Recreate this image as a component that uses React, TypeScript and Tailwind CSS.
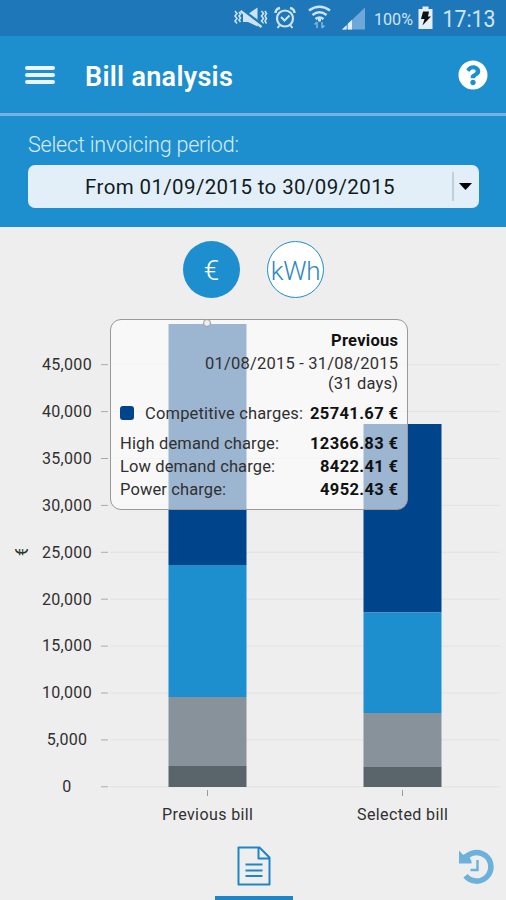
import { FaQuestionCircle } from "react-icons/fa";

const BAR_COLORS = ["#00458c", "#1e8fce", "#87929b", "#5a646b"];

// Edges of each stacked segment, top to bottom, in chart coordinates.
const BARS = [
  { label: "Previous bill", x: 168.5, edges: [14, 255, 387, 456, 477] },
  { label: "Selected bill", x: 363.5, edges: [114, 302.5, 403, 456.5, 477] },
];

const TICKS = ["45,000", "40,000", "35,000", "30,000", "25,000", "20,000", "15,000", "10,000", "5,000", "0"];

const CHARGES = [
  { name: "High demand charge:", value: "12366.83 €", width: 159 },
  { name: "Low demand charge:", value: "8422.41 €", width: 155 },
  { name: "Power charge:", value: "4952.43 €", width: 106 },
];

function StatusBar() {
  return (
    <div className="h-9 shrink-0 bg-[#1e77b8]">
      <svg width="506" height="36" viewBox="0 0 506 36" className="block">
        <g fill="none" stroke="#cde4f7" strokeWidth="1.6">
          <path d="M235 11l2 2.500-2 2.500 2 2.500-2 2.500 2 2.500M239 12l1.500 2-1.500 2 1.500 2-1.500 2 1.500 2" />
          <path d="M261.500 11l2 2.500-2 2.500 2 2.500-2 2.500 2 2.500M265 11l1.500 2.500-1.500 2.500 1.500 2.500-1.500 2.500 1.500 2.500" />
          <path d="M243 14h5l9.500-6.500v19L248 22h-5z" fill="#cde4f7" stroke="none" />
          <path d="M241 9L263 25.500" stroke="#1e77b8" strokeWidth="3" />
          <path d="M240.500 11L261.500 27" strokeWidth="2.400" />
          <circle cx="285" cy="18.500" r="8" strokeWidth="2.200" />
          <path d="M281 17l3.500 3.500 5-5M279.500 25.500l-2 2.500M290.500 25.500l2 2.500" strokeWidth="2" />
          <path d="M275.500 13q0-4 4.500-5M294.500 13q0-4-4.500-5" strokeWidth="2.400" />
          <path d="M309 10.500q10.500-7.500 21 0M312.500 15q7-5.500 14 0M315.500 19q4-3 8 0" strokeWidth="2.600" />
          <path d="M317 22v6M314.500 24.500l2.500-2.500M322 22v6M324.500 25.500l-2.500 2.500" stroke="#78b3df" strokeWidth="1.700" />
        </g>
        <circle cx="319.500" cy="20" r="1.700" fill="#d9ebfa" />
        <path d="M342 29.500L365 7.500v22z" fill="#6da8d8" />
        <path d="M342 29.500l4.500-4.300v4.300zM348 29.500v-6l4-3.800v9.800z" fill="#e0effb" />
        <text x="374" y="25" fontSize="17" textLength="39" lengthAdjust="spacingAndGlyphs" fill="#d0e5f7" className="font-['Roboto',sans-serif]">100%</text>
        <path d="M418.500 9h4V6.500h6V9h4v20h-14z" fill="#e3f0fc" />
        <path d="M423 11.500h6l-1 5h3l-8.500 9 2-6.500H421z" fill="#111" />
        <text x="442.500" y="27" fontSize="23.500" textLength="53" lengthAdjust="spacingAndGlyphs" fill="#d0e5f7" className="font-['Roboto',sans-serif]">17:13</text>
      </svg>
    </div>
  );
}

function TitleBar() {
  return (
    <header className="flex h-20 shrink-0 items-center border-b-[3px] border-[#77b1e2] pr-[18px] pl-[25px]">
      <div className="flex w-[30px] flex-col gap-[3px]">
        <span className="h-1 rounded-sm bg-[#eaf4fd]" />
        <span className="h-1 rounded-sm bg-[#eaf4fd]" />
        <span className="h-1 rounded-sm bg-[#eaf4fd]" />
      </div>
      <h1 className="mt-1 ml-[30px] grow text-[27px] leading-8 font-semibold tracking-[0.3px] text-white">Bill analysis</h1>
      <FaQuestionCircle size={30} color="#fff" />
    </header>
  );
}

function PeriodPicker() {
  return (
    <section className="flex h-[111px] shrink-0 flex-col px-[28px] pt-[15px]">
      <label className="text-[21.5px] leading-7 font-light tracking-[-0.19px] text-[#d9ebfa]">Select invoicing period:</label>
      <button className="mt-[6px] flex h-[43px] w-[451px] items-center rounded-[7px] bg-[#e2eff9] text-[#111b22]">
        <span className="w-[424px] pt-px text-center text-[20.5px] tracking-[0.37px]">From 01/09/2015 to 30/09/2015</span>
        <span className="h-[29px] w-[2px] bg-[#c3ced7]" />
        <svg width="13" height="7" viewBox="0 0 13 7" className="ml-[5px]">
          <path d="M0 0h13L6.500 7z" fill="#000" />
        </svg>
      </button>
    </section>
  );
}

function UnitToggle() {
  return (
    <div className="flex h-[83px] shrink-0 gap-[27px] pt-[14px] pl-[183px] font-light">
      <button className="flex size-[57px] items-center justify-center rounded-full bg-[#1e8fce] pt-[3px] text-[28px] text-white">€</button>
      <button className="flex size-[57px] items-center justify-center rounded-full border border-[#1e8fce] bg-white pt-[3px] text-[26px] tracking-[-0.3px] text-[#2c88c5]">kWh</button>
    </div>
  );
}

function Chart() {
  return (
    <svg width="506" height="530" viewBox="0 0 506 530" className="block font-['Roboto',sans-serif]">
      <clipPath id="axis-title"><rect x="10" y="239" width="22" height="10" /></clipPath>
      {TICKS.map((label, i) => {
        const y = 54.7 + i * 46.9;
        return (
          <g key={label}>
            <path d={`M110 ${y}H500`} stroke="#e2e2e2" />
            <path d={`M101 ${y}H108`} stroke="#aaa" />
            <text x="67" y={y + 5.3} fontSize="16" letterSpacing="0.3" textAnchor="middle" fill="#303030">{label}</text>
          </g>
        );
      })}
      <g clipPath="url(#axis-title)">
        <text transform="translate(27.500 241) rotate(-90)" fontSize="18" textAnchor="middle" fill="#333">€</text>
      </g>
      {BARS.map((bar) => (
        <g key={bar.label}>
          {BAR_COLORS.map((color, i) => (
            <rect key={color} x={bar.x} y={bar.edges[i]} width="78" height={bar.edges[i + 1] - bar.edges[i]} fill={color} />
          ))}
          <path d={`M${bar.x + 39} 480v6`} stroke="#999" />
          <text x={bar.x + 39} y="509.500" fontSize="16" textLength="91" textAnchor="middle" fill="#303030">{bar.label}</text>
        </g>
      ))}
    </svg>
  );
}

function Fitted({ text, width, bold = false }: { text: string; width: number; bold?: boolean }) {
  return (
    <svg width={width} height="22" className="block overflow-visible">
      <text x="0" y="16.400" fontSize="16.500" fontWeight={bold ? 700 : 400} textLength={width} fill={bold ? "#111" : "#303030"}>{text}</text>
    </svg>
  );
}

function Tooltip() {
  return (
    <div className="absolute top-[9px] left-[110px] flex h-[191px] w-[298px] flex-col rounded-[11px] border border-[#999] bg-white/61 px-[9px] pt-[10px]">
      <span className="absolute top-[-1px] left-[92px] size-[8px] rounded-full border border-[#999] bg-[#eee]" />
      <div className="flex h-[22px] justify-end"><Fitted text="Previous" width={67} bold /></div>
      <div className="mt-px flex h-[20px] justify-end"><Fitted text="01/08/2015 - 31/08/2015" width={193} /></div>
      <div className="flex h-[30px] justify-end"><Fitted text="(31 days)" width={70} /></div>
      <div className="flex h-[30px]">
        <span className="mt-[3px] mr-[11px] size-[14px] rounded-[3px] bg-[#00458c]" />
        <Fitted text="Competitive charges:" width={158} />
        <span className="ml-auto"><Fitted text="25741.67 €" width={88} bold /></span>
      </div>
      {CHARGES.map((c) => (
        <div key={c.name} className="flex h-[23px] justify-between">
          <Fitted text={c.name} width={c.width} />
          <Fitted text={c.value} width={c.value.length === 10 ? 88 : 78} bold />
        </div>
      ))}
    </div>
  );
}

function BottomNav() {
  return (
    <nav className="flex h-[60px] shrink-0 justify-between pr-[12px] pl-[215px]">
      <div className="flex w-[78px] flex-col items-center justify-between">
        <svg width="34" height="41" viewBox="0 0 34 41" fill="none" stroke="#1e86c5" strokeWidth="2" strokeLinejoin="round" className="mt-[6px]">
          <path d="M1.500 1.500h21l10 10v27h-31zM21.500 1.500v11h11" />
          <path d="M8.500 18.500h17M8.500 24.500h17M8.500 30h17" strokeWidth="2.200" />
        </svg>
        <span className="h-1 w-full bg-[#1e86c5]" />
      </div>
      <svg width="36" height="36" viewBox="0 0 36 36" fill="none" stroke="#6bb1db" className="mt-[8px]">
        <path d="M6.600 11A14.300 14.300 0 1 1 7.500 27.800" strokeWidth="5.600" />
        <path d="M1 2.500l4.200 4.500 3.800-2 4.500 8v2.500H1z" fill="#6bb1db" stroke="none" />
        <path d="M19.500 12v10h-7" strokeWidth="2.400" />
      </svg>
    </nav>
  );
}

export default function App() {
  return (
    <main className="flex h-[900px] w-[506px] flex-col overflow-hidden bg-[#eee] font-['Roboto',sans-serif]">
      <StatusBar />
      <div className="flex h-[191px] shrink-0 flex-col bg-[#1e8fce]">
        <TitleBar />
        <PeriodPicker />
      </div>
      <UnitToggle />
      <div className="relative h-[530px] shrink-0">
        <Chart />
        <Tooltip />
      </div>
      <BottomNav />
    </main>
  );
}
